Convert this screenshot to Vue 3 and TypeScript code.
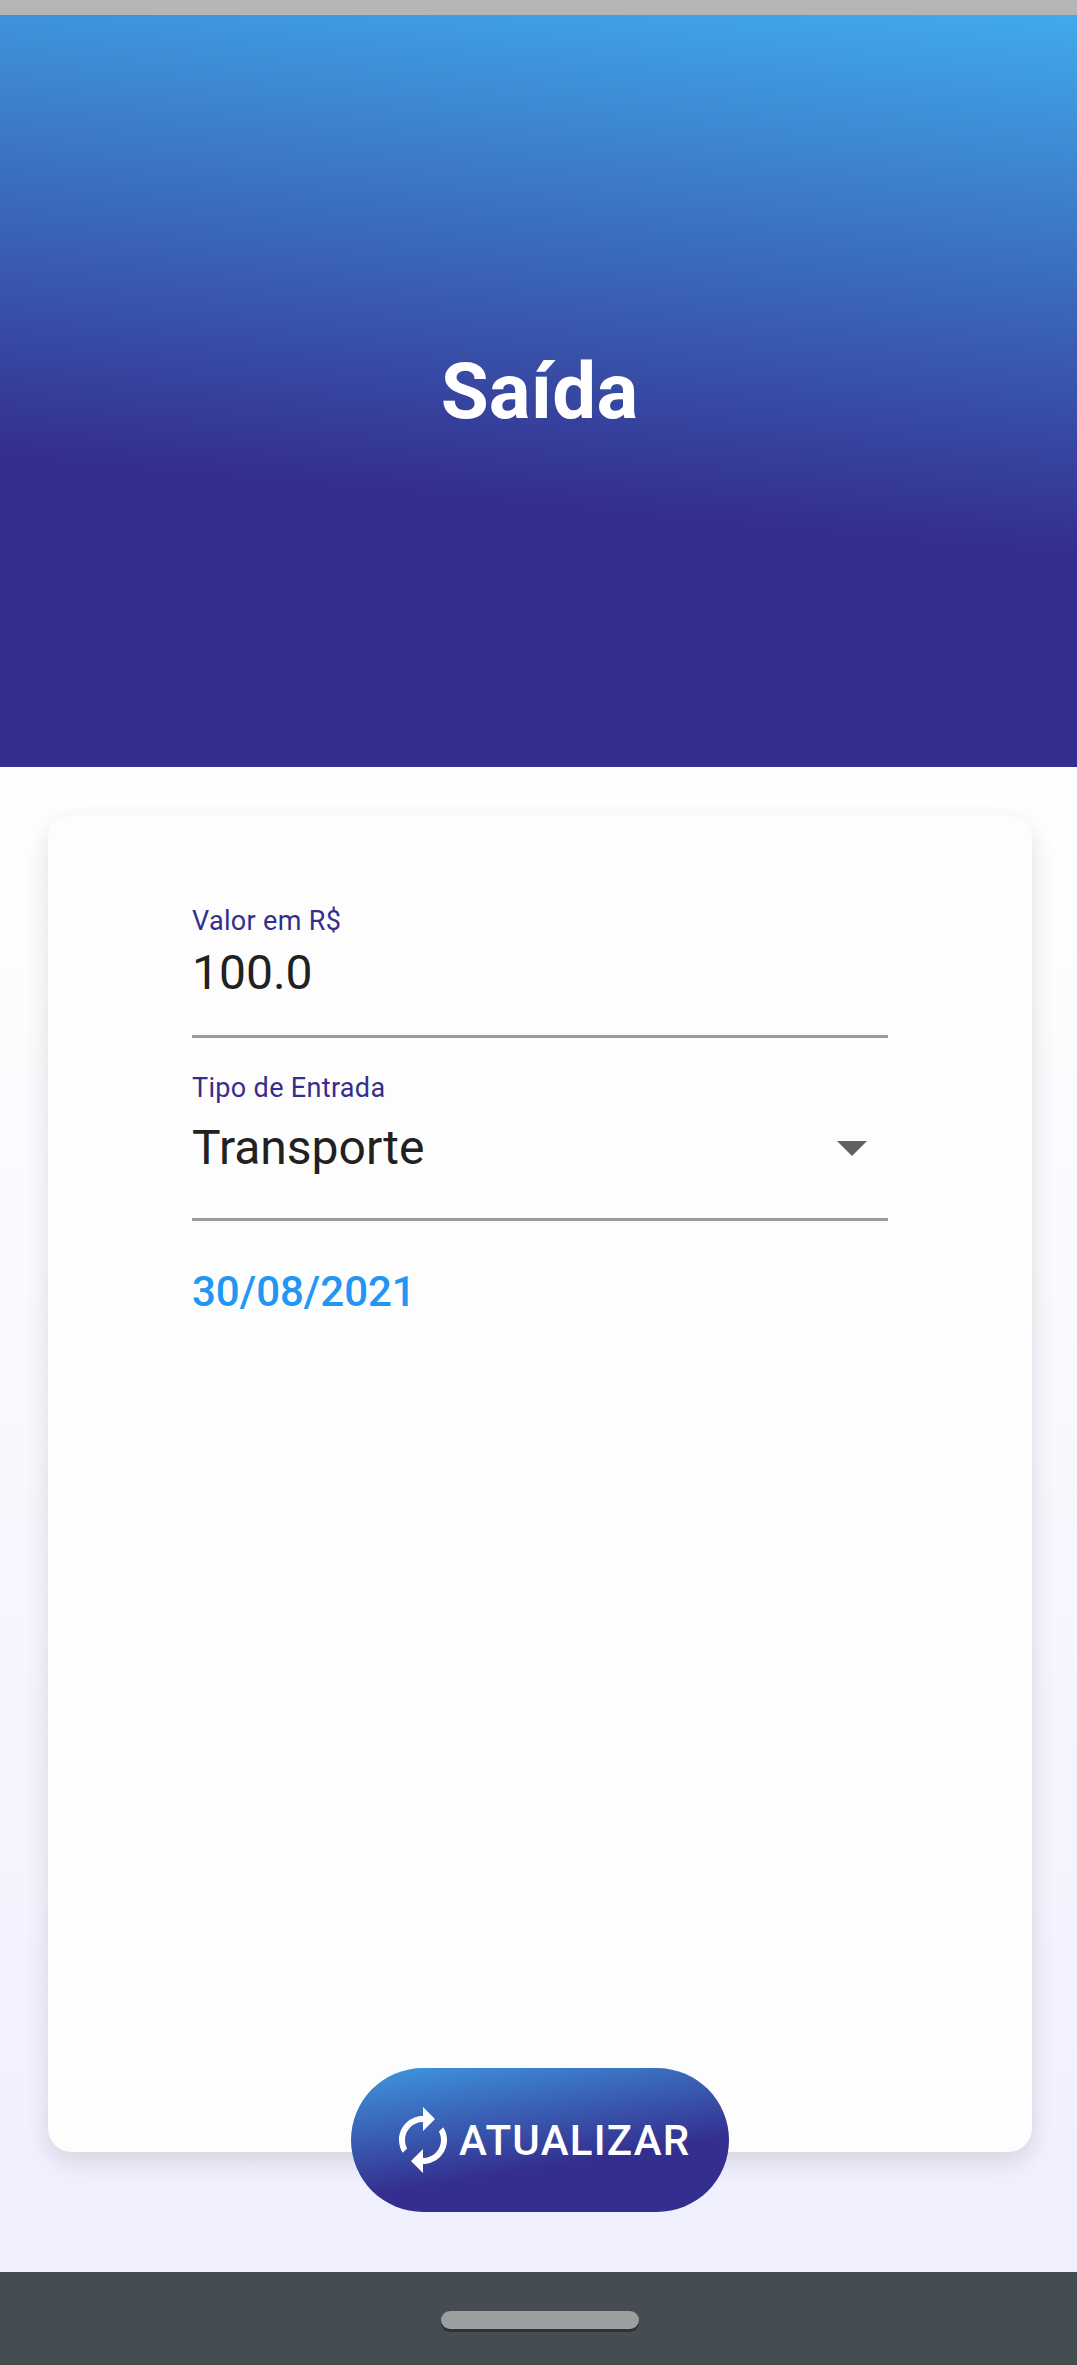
<script setup lang="ts">
import { ref } from 'vue'

interface Entry {
  title: string
  amountLabel: string
  amount: string
  typeLabel: string
  type: string
  date: string
}

const entry = ref<Entry>({
  title: 'Saída',
  amountLabel: 'Valor em R$',
  amount: '100.0',
  typeLabel: 'Tipo de Entrada',
  type: 'Transporte',
  date: '30/08/2021',
})
</script>

<template>
  <div class="screen">
    <div class="status-bar"></div>
    <header class="header">
      <h1 class="title">{{ entry.title }}</h1>
    </header>
    <main class="body">
      <section class="card">
        <div class="field amount">
          <label class="label">{{ entry.amountLabel }}</label>
          <div class="value">{{ entry.amount }}</div>
        </div>
        <div class="field type">
          <label class="label">{{ entry.typeLabel }}</label>
          <div class="value select">
            <span>{{ entry.type }}</span>
            <svg class="caret" viewBox="0 0 24 24"><path d="M7 10l5 5 5-5z" /></svg>
          </div>
        </div>
        <div class="date">{{ entry.date }}</div>
        <button class="update" type="button">
          <svg class="renew" viewBox="0 0 24 24">
            <path d="M12 6v3l4-4-4-4v3c-4.42 0-8 3.58-8 8 0 1.57.46 3.03 1.24 4.26L6.7 14.8c-.45-.83-.7-1.79-.7-2.8 0-3.31 2.69-6 6-6zm6.76 1.74L17.3 9.2c.44.84.7 1.79.7 2.8 0 3.31-2.69 6-6 6v-3l-4 4 4 4v-3c4.42 0 8-3.58 8-8 0-1.57-.46-3.03-1.24-4.26z" />
          </svg>
          <span class="update-text">ATUALIZAR</span>
        </button>
      </section>
    </main>
    <nav class="nav-bar"><div class="handle"></div></nav>
  </div>
</template>

<style>
body {
  margin: 0;
}
</style>

<style scoped>
.screen {
  width: 1077px;
  height: 2365px;
  display: flex;
  flex-direction: column;
  overflow: hidden;
  font-family: Roboto, sans-serif;
}
.status-bar {
  height: 15px;
  flex: none;
  background: #b5b5b5;
}
.header {
  height: 752px;
  flex: none;
  box-sizing: border-box;
  padding: 2px 0 0 2px;
  display: flex;
  justify-content: center;
  align-items: center;
  background: linear-gradient(185.14deg, #41aaec 0, #342e8e 534px);
}
.title {
  margin: 0;
  font-size: 78px;
  line-height: 92px;
  font-weight: 700;
  letter-spacing: 0.2px;
  color: #fff;
}
.body {
  flex: 1;
  display: flex;
  box-sizing: border-box;
  padding: 48px 45px 120px 48px;
  background: linear-gradient(#fff, #f0effe);
}
.card {
  position: relative;
  flex: 1;
  box-sizing: border-box;
  padding: 85px 144px 0;
  border-radius: 24px;
  background: #fdfdfd;
  box-shadow: 0 9px 26px rgba(0, 0, 0, 0.125);
}
.field {
  box-sizing: border-box;
  border-bottom: 3px solid #9b9b9b;
}
.amount {
  height: 138px;
}
.type {
  height: 183px;
  padding-top: 29px;
}
.label {
  display: block;
  font-size: 27px;
  line-height: 42px;
  letter-spacing: 0.33px;
  color: #342e8e;
}
.value {
  font-size: 48px;
  line-height: 62px;
  color: #212121;
}
.select {
  display: flex;
  justify-content: space-between;
  align-items: center;
  height: 76px;
}
.select span {
  padding-top: 2px;
}
.caret {
  width: 72px;
  height: 72px;
  fill: #616161;
}
.date {
  margin-top: 46px;
  font-size: 42px;
  line-height: 50px;
  font-weight: 500;
  color: #2196f3;
}
.update {
  position: absolute;
  left: 303px;
  bottom: -60px;
  width: 378px;
  height: 144px;
  display: flex;
  align-items: center;
  box-sizing: border-box;
  padding: 0 0 0 36px;
  border: 0;
  border-radius: 72px;
  background: linear-gradient(170.7deg, #3f98e0 0, #342e8e 130px);
  color: #fff;
  font: 500 42px/50px Roboto, sans-serif;
  letter-spacing: 1.25px;
}
.update-text {
  padding-top: 2px;
}
.renew {
  flex: none;
  width: 72px;
  height: 72px;
  fill: #fff;
}
.nav-bar {
  height: 93px;
  flex: none;
  box-sizing: border-box;
  padding: 39px 0 0 3px;
  display: flex;
  justify-content: center;
  align-items: flex-start;
  background: #454c52;
}
.handle {
  width: 198px;
  height: 18px;
  border-radius: 9px;
  background: #9b9f9f;
  box-shadow: 0 3px 0 #2d3335;
}
</style>
